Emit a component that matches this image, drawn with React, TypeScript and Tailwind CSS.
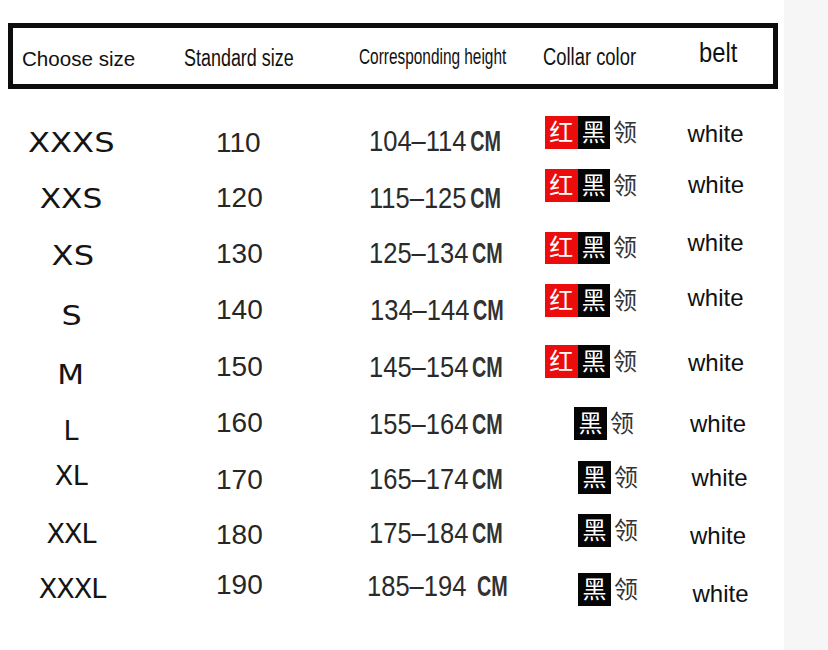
import React from "react";

type Row = {
  size: string;
  sizeCls: string;
  sizeInner: string;
  std: string;
  stdCls: string;
  h: string;
  sp: boolean;
  hCls: string;
  red: boolean;
  bCls: string;
  wCls: string;
};

const rows: Row[] = [
  { size: "XXXS", sizeCls: "mt-[16.5px]", sizeInner: "scale-x-[1.19]", std: "110", stdCls: "mt-[17px]", h: "104–114", sp: false, hCls: "mt-[15px] pl-[2px]", red: true, bCls: "mt-[4px]", wCls: "mt-[9.7px] pl-[1.5px]" },
  { size: "XXS", sizeCls: "mt-[17px]", sizeInner: "scale-x-[1.16]", std: "120", stdCls: "mt-[15.7px]", h: "115–125", sp: false, hCls: "mt-[15.5px] pl-[2px]", red: true, bCls: "mt-[1px]", wCls: "mt-[5px] pl-[2px]" },
  { size: "XS", sizeCls: "mt-[18px] pl-[3px]", sizeInner: "scale-x-[1.19]", std: "130", stdCls: "mt-[15.7px]", h: "125–134", sp: false, hCls: "mt-[15.2px] pl-[2px]", red: true, bCls: "mt-[7.7px]", wCls: "mt-[7.4px] pl-[1.5px]" },
  { size: "S", sizeCls: "mt-[22px] pl-[1px]", sizeInner: "scale-x-[1.18]", std: "140", stdCls: "mt-[16.4px]", h: "134–144", sp: false, hCls: "mt-[16.2px] pl-[3px]", red: true, bCls: "mt-[4px]", wCls: "mt-[6.4px] pl-[1.5px]" },
  { size: "M", sizeCls: "mt-[25px]", sizeInner: "scale-x-[1.15]", std: "150", stdCls: "mt-[17.4px]", h: "145–154", sp: false, hCls: "mt-[17.2px] pl-[2px]", red: true, bCls: "mt-[9px]", wCls: "mt-[14.7px] pl-[2px]" },
  { size: "L", sizeCls: "mt-[25px]", sizeInner: "", std: "160", stdCls: "mt-[17.4px]", h: "155–164", sp: false, hCls: "mt-[18.2px] pl-[2px]", red: false, bCls: "mt-[14.7px] pl-[29px]", wCls: "mt-[20.4px] pl-[4px]" },
  { size: "XL", sizeCls: "mt-[14px] tracking-[-0.5px]", sizeInner: "", std: "170", stdCls: "mt-[18.4px]", h: "165–174", sp: false, hCls: "mt-[17.2px] pl-[2px]", red: false, bCls: "mt-[12.7px] pl-[33px]", wCls: "mt-[18.4px] pl-[5.5px]" },
  { size: "XXL", sizeCls: "mt-[16px] tracking-[-1px]", sizeInner: "", std: "180", stdCls: "mt-[17.4px]", h: "175–184", sp: false, hCls: "mt-[15.2px] pl-[2px]", red: false, bCls: "mt-[10px] pl-[33px]", wCls: "mt-[19.7px] pl-[4px]" },
  { size: "XXXL", sizeCls: "mt-[15px] tracking-[-1px] pl-[2px]", sizeInner: "", std: "190", stdCls: "mt-[11.4px]", h: "185–194", sp: true, hCls: "mt-[12.2px] pl-[0px]", red: false, bCls: "mt-[12.7px] pl-[33px]", wCls: "mt-[22.4px] pl-[6.5px]" },
];

const cjk = "font-['Noto_Sans_CJK_SC','Noto_Sans_CJK_JP',sans-serif]";

export default function App() {
  return (
    <div className="flex w-[828px] h-[650px] bg-white font-['Liberation_Sans',Arial,sans-serif] text-[#111]">
      <div className="w-[784px] h-full bg-white pt-[23px] flex flex-col">
        {/* Header box */}
        <div className="ml-[8px] w-[770px] h-[66px] border-[5px] border-[#0d0d0d] flex items-start pl-[8.5px]">
          <div className="w-[162.5px] mt-[20px] text-[21px] leading-none whitespace-nowrap">
            <div className="origin-left scale-x-[0.98]">Choose size</div>
          </div>
          <div className="w-[175px] mt-[19px]">
            <div className="text-[23px] leading-none whitespace-nowrap origin-left scale-x-[0.78]">Standard size</div>
          </div>
          <div className="w-[184px] mt-[17.5px]">
            <div className="text-[22px] leading-none whitespace-nowrap origin-left scale-x-[0.70]">Corresponding height</div>
          </div>
          <div className="w-[156px] mt-[18px]">
            <div className="text-[23px] leading-none whitespace-nowrap origin-left scale-x-[0.80]">Collar color</div>
          </div>
          <div className="mt-[12px]">
            <div className="text-[27px] leading-none whitespace-nowrap origin-left scale-x-[0.88]">belt</div>
          </div>
        </div>

        {/* Body rows */}
        <div className="mt-[23px] flex flex-col">
          {rows.map((r) => (
            <div key={r.size} className="flex items-start h-[56px]">
              <div className={`w-[142px] text-center text-[27px] leading-none font-['DejaVu_Sans',sans-serif] text-[#141414] ${r.sizeCls}`}>
                <span className={`inline-block origin-center ${r.sizeInner}`}>{r.size}</span>
              </div>
              <div className={`w-[225px] pl-[74px] text-[28px] leading-none text-[#262626] ${r.stdCls}`}>{r.std}</div>
              <div className={`w-[178px] ${r.hCls}`}>
                <div className="origin-left scale-x-[0.88] whitespace-nowrap text-[29px] leading-none text-[#2a2a2a]">
                  {r.h}
                  {r.sp ? " " : ""}
                  <span className="inline-block w-[35px] ml-[4px]">
                    <span className="inline-block origin-left scale-x-[0.775] font-bold text-[#333]">CM</span>
                  </span>
                </div>
              </div>
              <div className={`w-[141px] flex items-center ${r.bCls}`}>
                {r.red && (
                  <div className={`w-[32.5px] h-[32.5px] bg-[#ec0c0c] text-white flex items-center justify-center pb-[3px] text-[24px] leading-none ${cjk}`}>
                    红
                  </div>
                )}
                <div className={`${r.red ? "w-[32.5px] h-[32.5px]" : "w-[33px] h-[33px]"} bg-[#050505] text-white flex items-center justify-center pb-[3px] text-[24px] leading-none ${cjk}`}>
                  黑
                </div>
                <div className={`ml-[3px] pb-[3px] text-[24px] leading-none text-[#333] ${cjk}`}>领</div>
              </div>
              <div className={`text-[24px] leading-none text-[#111] ${r.wCls}`}>white</div>
            </div>
          ))}
        </div>
      </div>
      <div className="flex-1 h-full bg-[#f6f6f6]" />
    </div>
  );
}
